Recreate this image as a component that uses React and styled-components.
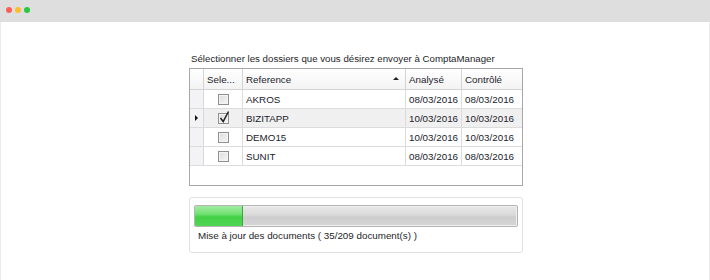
import React from "react";
import styled, { createGlobalStyle } from "styled-components";

const Global = createGlobalStyle`
  html, body { margin: 0; padding: 0; background: #ffffff; }
  body { font-family: "Liberation Sans", Arial, sans-serif; }
`;

const Window = styled.div`
  width: 710px;
  height: 280px;
  display: flex;
  flex-direction: column;
  box-sizing: border-box;
  overflow: hidden;
`;

const TitleBar = styled.div`
  height: 22px;
  flex: none;
  background: #dedede;
  display: flex;
  align-items: center;
  gap: 3px;
  padding: 0 0 2px 6px;
  box-sizing: border-box;
`;

const Dot = styled.span`
  width: 6px;
  height: 6px;
  border-radius: 50%;
  background: ${(p) => p.$c};
`;

const Content = styled.div`
  flex: 1;
  background: #ffffff;
  border-left: 1px solid #ececec;
  border-right: 1px solid #ececec;
  padding: 31px 0 0 188px;
  display: flex;
  flex-direction: column;
`;

const Column = styled.div`
  width: 334px;
  display: flex;
  flex-direction: column;
`;

const Title = styled.div`
  font-size: 9.7px;
  line-height: 12px;
  color: #1e1e28;
  padding-left: 2px;
  margin-bottom: 3px;
  white-space: nowrap;
`;

const Grid = styled.div`
  border: 1px solid #a7a7a7;
  height: 116px;
  display: grid;
  grid-template-columns: 14px 39px 163px 56px 60px;
  grid-auto-rows: 19px;
  grid-template-rows: 21px;
  align-content: start;
  font-size: 9.8px;
  color: #1c1c2c;
`;

const HeadCell = styled.div`
  display: flex;
  align-items: center;
  padding: 0 3px;
  box-sizing: border-box;
  background: linear-gradient(#ffffff, #f3f3f3);
  border-bottom: 1px solid #d4d4d4;
  border-right: ${(p) => (p.$last ? "none" : "1px solid #d4d4d4")};
  position: relative;
  white-space: nowrap;
`;

const SortGlyph = styled.span`
  position: absolute;
  right: 6px;
  top: 8px;
  width: 0;
  height: 0;
  border-left: 3px solid transparent;
  border-right: 3px solid transparent;
  border-bottom: 3px solid #222;
`;

const RowHead = styled.div`
  background: #f3f3f5;
  border-right: 1px solid #d9d9d9;
  border-bottom: 1px solid #dcdcdc;
  display: flex;
  align-items: center;
  justify-content: center;
`;

const Arrow = styled.span`
  width: 0;
  height: 0;
  border-top: 3px solid transparent;
  border-bottom: 3px solid transparent;
  border-left: 3px solid #111;
  margin-right: 1px;
`;

const Cell = styled.div`
  display: flex;
  align-items: center;
  justify-content: ${(p) => (p.$center ? "center" : "flex-start")};
  padding: 0 ${(p) => (p.$center ? "0" : "3px")};
  box-sizing: border-box;
  background: ${(p) => (p.$sel ? "#f0f0f0" : "#ffffff")};
  border-bottom: 1px solid #dcdcdc;
  border-right: ${(p) => (p.$last ? "none" : "1px solid #dcdcdc")};
  white-space: nowrap;
`;

const Box = styled.span`
  position: relative;
  width: 11px;
  height: 11px;
  box-sizing: border-box;
  border: 1px solid #8e8f8f;
  background: linear-gradient(135deg, #dcdcdc, #f6f6f6);
  box-shadow: inset 0 0 0 1px #f4f4f4;
  margin-left: 1px;
`;

const Check = styled.svg`
  position: absolute;
  left: 0px;
  top: -3px;
  overflow: visible;
`;

const Group = styled.div`
  margin-top: 11px;
  height: 56px;
  box-sizing: border-box;
  border: 1px solid #e1e1e1;
  border-radius: 3px;
  padding: 7px 4px 0 4px;
  display: flex;
  flex-direction: column;
`;

const Bar = styled.div`
  height: 22px;
  box-sizing: border-box;
  border: 1px solid #b4b4b4;
  border-radius: 2px;
  background: linear-gradient(#e8e8e8 0%, #dadada 45%, #cdcdcd 55%, #d6d6d6 100%);
  box-shadow: inset 0 0 0 1px #efefef;
  overflow: hidden;
  display: flex;
`;

const Fill = styled.div`
  height: 100%;
  background: linear-gradient(#a2eca1 0%, #72e172 40%, #42d046 55%, #52d655 100%);
  border-right: 1px solid #36ab3a;
`;

const Status = styled.div`
  font-size: 9.8px;
  line-height: 12px;
  color: #1e1e28;
  padding: 3px 0 0 4px;
  white-space: nowrap;
`;

const rows = [
  { ref: "AKROS", a: "08/03/2016", c: "08/03/2016", checked: false },
  { ref: "BIZITAPP", a: "10/03/2016", c: "10/03/2016", checked: true, current: true },
  { ref: "DEMO15", a: "10/03/2016", c: "10/03/2016", checked: false },
  { ref: "SUNIT", a: "08/03/2016", c: "08/03/2016", checked: false },
];

export default function App() {
  const done = 35;
  const total = 209;
  const progress = 14.5;
  return (
    <>
      <Global />
      <Window>
        <TitleBar>
          <Dot $c="#fe5f57" />
          <Dot $c="#febc2e" />
          <Dot $c="#28c840" />
        </TitleBar>
        <Content>
          <Column>
            <Title>Sélectionner les dossiers que vous désirez envoyer à ComptaManager</Title>
            <Grid>
              <HeadCell />
              <HeadCell>Sele...</HeadCell>
              <HeadCell>
                Reference
                <SortGlyph />
              </HeadCell>
              <HeadCell>Analysé</HeadCell>
              <HeadCell $last>Contrôlé</HeadCell>
              {rows.map((r) => (
                <React.Fragment key={r.ref}>
                  <RowHead>{r.current && <Arrow />}</RowHead>
                  <Cell $center $sel={r.current}>
                    <Box>
                      {r.checked && (
                        <Check width="11" height="12" viewBox="0 0 11 12">
                          <path d="M1.5 7 L4.2 10.5 L9.5 0.5" fill="none" stroke="#222" strokeWidth="1.5" />
                        </Check>
                      )}
                    </Box>
                  </Cell>
                  <Cell $sel={r.current}>{r.ref}</Cell>
                  <Cell $sel={r.current}>{r.a}</Cell>
                  <Cell $sel={r.current} $last>{r.c}</Cell>
                </React.Fragment>
              ))}
            </Grid>
            <Group>
              <Bar>
                <Fill style={{ width: `${progress}%` }} />
              </Bar>
              <Status>Mise à jour des documents ( {done}/{total} document(s) )</Status>
            </Group>
          </Column>
        </Content>
      </Window>
    </>
  );
}
